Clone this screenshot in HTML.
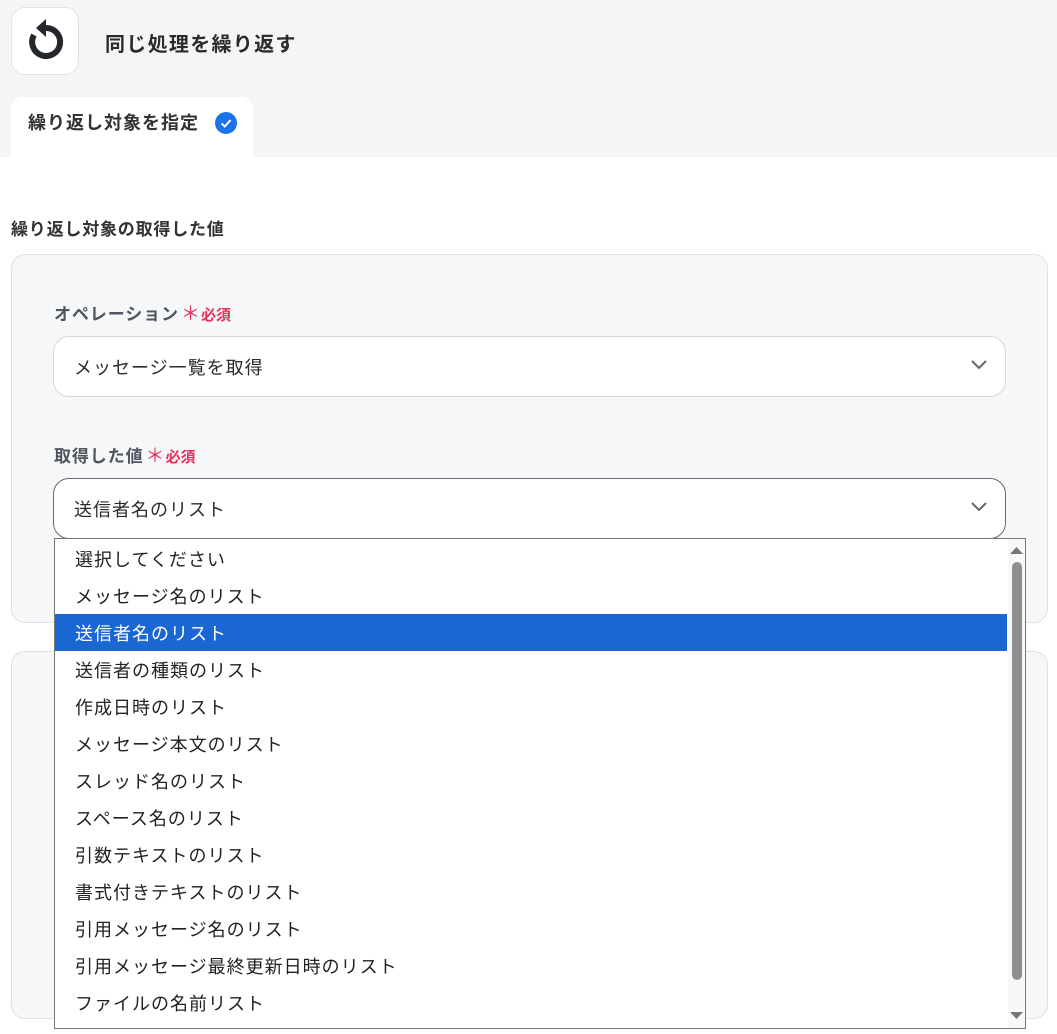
<!DOCTYPE html>
<html><head><meta charset="utf-8"><style>
*{box-sizing:border-box;margin:0;padding:0}
body{width:1057px;height:1034px;overflow:hidden;background:#fff;font-family:"Liberation Sans","Noto Sans CJK JP",sans-serif;color:#2b2b2b;position:relative}
.top{position:absolute;left:0;top:0;width:1057px;height:157px;background:#f5f5f5}
.icon{position:absolute;left:11px;top:7px;width:68px;height:68px;background:#fff;border:1px solid #e3e3e3;border-radius:14px}
.title{position:absolute;left:105px;top:28px;font-size:20px;font-weight:bold;color:#2b2b2b;letter-spacing:1.3px}
.tab{position:absolute;left:11px;top:97px;width:242px;height:60px;background:#fff;border-radius:12px 12px 0 0}
.tab span{position:absolute;left:17px;top:12px;font-size:18px;font-weight:bold;color:#333;letter-spacing:1px}
.chk{position:absolute;left:204px;top:15px;width:22px;height:22px;border-radius:50%;background:#1a73e8}
.lbl{position:absolute;left:11px;top:215px;font-size:17px;font-weight:bold;color:#333;letter-spacing:0.8px}
.panel{position:absolute;left:11px;width:1037px;background:#f6f7f9;border:1px solid #dde1e7;border-radius:14px}
.flab{position:absolute;left:54px;font-size:17px;font-weight:bold;color:#50565f;letter-spacing:0.9px}
.req{color:#e8305a;font-size:15px;margin-left:2px;letter-spacing:0}
.req b{font-size:19px;font-weight:normal;margin-right:1px}
.sel{position:absolute;left:53px;width:953px;height:61px;background:#fff;border:1px solid #d5d9e0;border-radius:16px;font-size:18px;padding:17px 0 0 20px;color:#2b2b2b;letter-spacing:1px}
.sel svg{position:absolute;right:18px;top:23px}
.list{position:absolute;left:54px;top:538px;width:972px;height:491px;background:#fff;border:1px solid #777;}
.it{position:absolute;left:0;width:952px;height:37px;font-size:18px;padding:6px 0 0 20px;color:#222;letter-spacing:1px}
.hi{background:#1a66d2;color:#fff}
.sb{position:absolute;left:953px;top:0;width:17px;height:489px;background:#f8f8f8}
.thumb{position:absolute;left:4px;top:23px;width:10px;height:418px;background:#8f8f8f;border-radius:5px}
</style></head><body>
<div class="top"></div>
<div class="icon"><svg width="68" height="68" viewBox="0 0 68 68"><path d="M34 20 A14 14 0 1 1 22 27" fill="none" stroke="#24272b" stroke-width="6"/><path d="M34 11 L34 29 L24 20 Z" fill="#24272b"/></svg></div>
<div class="title">同じ処理を繰り返す</div>
<div class="tab"><span>繰り返し対象を指定</span><div class="chk"><svg width="22" height="22"><path d="M6.5 11.5 L9.8 14.5 L15.5 8" fill="none" stroke="#fff" stroke-width="2"/></svg></div></div>
<div class="lbl">繰り返し対象の取得した値</div>
<div class="panel" style="top:254px;height:369px"></div>
<div class="panel" style="top:651px;height:368px"></div>
<div class="flab" style="top:299px">オペレーション<span class="req"><b>＊</b>必須</span></div>
<div class="sel" style="top:336px">メッセージ一覧を取得<svg width="16" height="10"><path d="M1 1 L8 8 L15 1" fill="none" stroke="#666" stroke-width="2"/></svg></div>
<div class="flab" style="top:441px">取得した値<span class="req"><b>＊</b>必須</span></div>
<div class="sel" style="top:478px;border-color:#666b73">送信者名のリスト<svg width="16" height="10"><path d="M1 1 L8 8 L15 1" fill="none" stroke="#666" stroke-width="2"/></svg></div>
<div class="list">
<div class="it" style="top:1px">選択してください</div>
<div class="it" style="top:38px">メッセージ名のリスト</div>
<div class="it hi" style="top:75px">送信者名のリスト</div>
<div class="it" style="top:112px">送信者の種類のリスト</div>
<div class="it" style="top:149px">作成日時のリスト</div>
<div class="it" style="top:186px">メッセージ本文のリスト</div>
<div class="it" style="top:223px">スレッド名のリスト</div>
<div class="it" style="top:260px">スペース名のリスト</div>
<div class="it" style="top:297px">引数テキストのリスト</div>
<div class="it" style="top:334px">書式付きテキストのリスト</div>
<div class="it" style="top:371px">引用メッセージ名のリスト</div>
<div class="it" style="top:408px">引用メッセージ最終更新日時のリスト</div>
<div class="it" style="top:445px">ファイルの名前リスト</div>
<div class="sb"><svg style="position:absolute;left:2px;top:8px" width="13" height="8"><path d="M0 7 L6.5 0 L13 7Z" fill="#777"/></svg><div class="thumb"></div><svg style="position:absolute;left:2px;top:473px" width="13" height="8"><path d="M0 0 L6.5 7 L13 0Z" fill="#777"/></svg></div>
</div>
</body></html>
